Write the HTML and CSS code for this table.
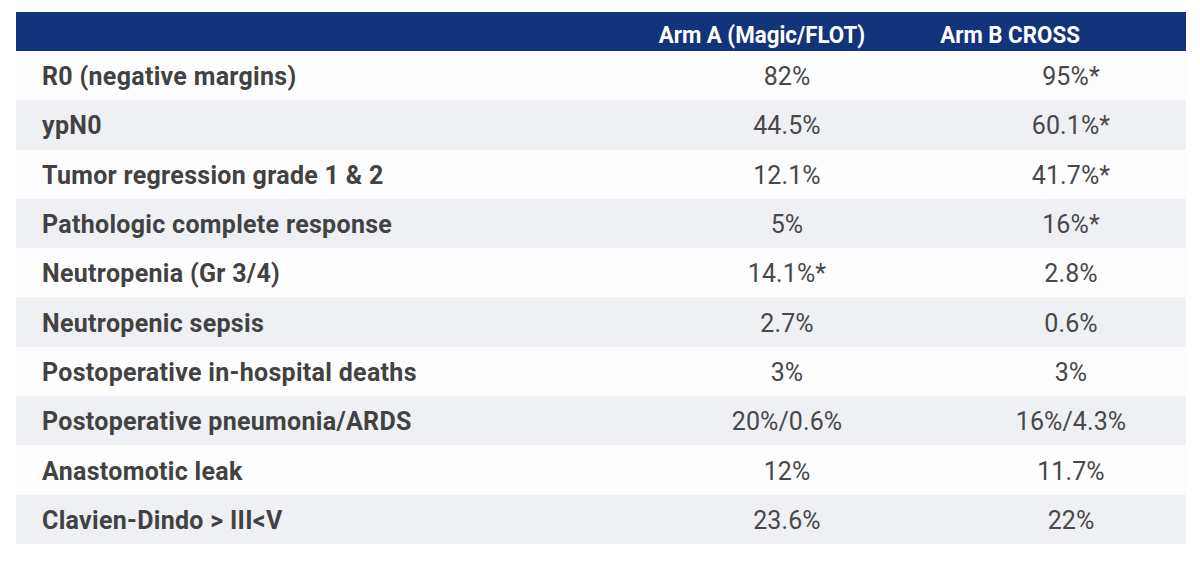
FILE: index.html
```html
<!DOCTYPE html>
<html>
<head>
<meta charset="utf-8">
<link rel="stylesheet" href="styles.css">
</head>
<body>
<div class="table">
  <div class="head">
    <div class="hcell"></div>
    <div class="hcell"><span class="htext">Arm A (Magic/FLOT)</span></div>
    <div class="hcell"><span class="htext">Arm B CROSS</span></div>
  </div>
  <div class="row"><div class="label">R0 (negative margins)</div><div class="val">82%</div><div class="val">95%*</div></div>
  <div class="row alt"><div class="label">ypN0</div><div class="val">44.5%</div><div class="val">60.1%*</div></div>
  <div class="row"><div class="label">Tumor regression grade 1 &amp; 2</div><div class="val">12.1%</div><div class="val">41.7%*</div></div>
  <div class="row alt"><div class="label">Pathologic complete response</div><div class="val">5%</div><div class="val">16%*</div></div>
  <div class="row"><div class="label">Neutropenia (Gr 3/4)</div><div class="val">14.1%*</div><div class="val">2.8%</div></div>
  <div class="row alt"><div class="label">Neutropenic sepsis</div><div class="val">2.7%</div><div class="val">0.6%</div></div>
  <div class="row"><div class="label">Postoperative in-hospital deaths</div><div class="val">3%</div><div class="val">3%</div></div>
  <div class="row alt"><div class="label">Postoperative pneumonia/ARDS</div><div class="val">20%/0.6%</div><div class="val">16%/4.3%</div></div>
  <div class="row"><div class="label">Anastomotic leak</div><div class="val">12%</div><div class="val">11.7%</div></div>
  <div class="row alt"><div class="label">Clavien-Dindo &gt; III&lt;V</div><div class="val">23.6%</div><div class="val">22%</div></div>
</div>
</body>
</html>
```
FILE: styles.css
```css
html, body {
  margin: 0;
  padding: 0;
  background: #ffffff;
}
body {
  font-family: Roboto, "Liberation Sans", sans-serif;
  color: #454545;
}
.table {
  margin: 12px 14px 0 16px;
  width: 1170px;
}
.head {
  display: grid;
  grid-template-columns: 1fr 248px 248px 52px;
  height: 39px;
  align-items: center;
  background: #13347a;
  color: #ffffff;
}
.hcell {
  text-align: center;
  padding-top: 6px;
  font-weight: 700;
  font-size: 24px;
  line-height: 28px;
  white-space: nowrap;
}
.htext {
  display: inline-block;
  transform: scaleX(0.93);
}
.row {
  display: grid;
  grid-template-columns: 1fr 338px 230px;
  height: 49.3px;
  align-items: center;
  background: #fdfdfd;
}
.row.alt {
  background: #eef0f4;
}
.label {
  padding-left: 26px;
  padding-top: 3px;
  font-weight: 700;
  font-size: 25px;
  line-height: 30px;
  letter-spacing: 0.3px;
  color: #424242;
  white-space: nowrap;
}
.val {
  text-align: center;
  padding-top: 3px;
  font-size: 25px;
  line-height: 30px;
  letter-spacing: 0.1px;
  color: #484848;
  white-space: nowrap;
}
```
